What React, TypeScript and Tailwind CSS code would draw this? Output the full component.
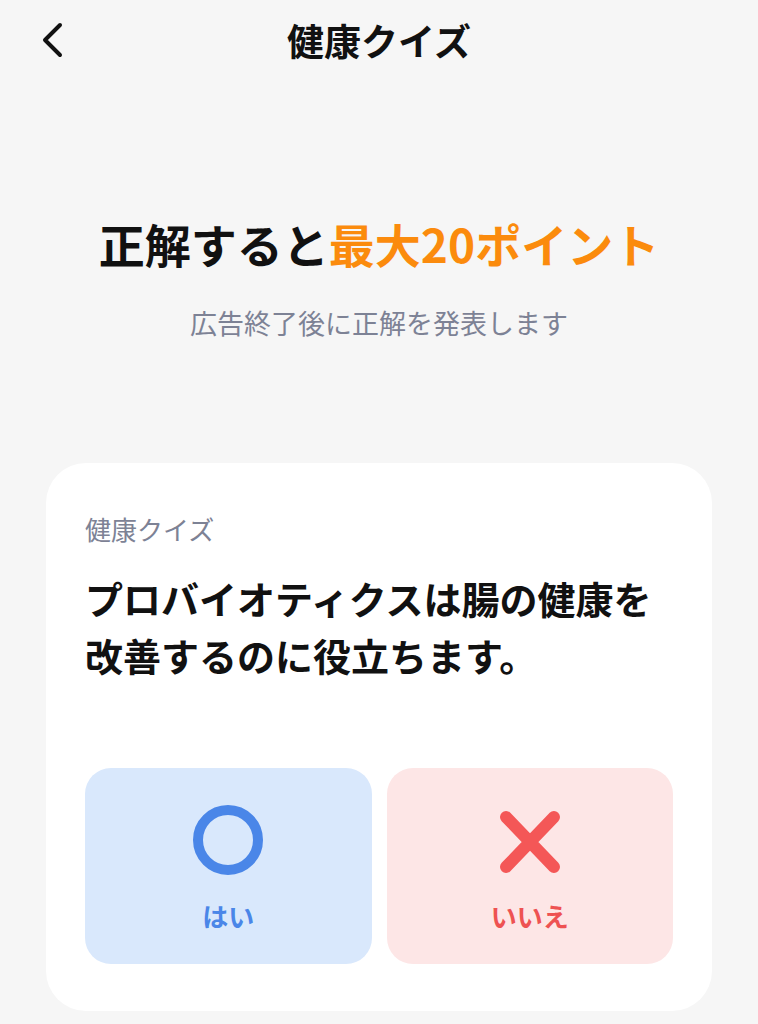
import React from 'react'

const jp = { fontFamily: '"Noto Sans CJK JP", "Noto Sans", sans-serif' }

function BackIcon() {
  return (
    <svg width="24" height="36" viewBox="0 0 24 36" fill="none">
      <polyline points="20,3 5,18 20,33" stroke="#111" strokeWidth="4" strokeLinecap="round" strokeLinejoin="round" />
    </svg>
  )
}

function CircleMark() {
  return (
    <svg width="72" height="72" viewBox="0 0 72 72" fill="none">
      <circle cx="36" cy="36" r="30" stroke="#4a86e8" strokeWidth="10" />
    </svg>
  )
}

function CrossMark() {
  return (
    <svg width="72" height="72" viewBox="0 0 72 72" fill="none">
      <path d="M12 13 L60 63 M60 13 L12 63" stroke="#f45757" strokeWidth="12" strokeLinecap="round" />
    </svg>
  )
}

export default function App() {
  return (
    <div className="min-h-[1024px] w-full bg-[#f6f6f6] flex flex-col" style={jp}>
      {/* header */}
      <div className="h-[80px] grid grid-cols-[1fr_auto_1fr] items-center px-[40px]">
        <button className="justify-self-start flex items-center"><BackIcon /></button>
        <div className="text-[37px] leading-[44px] font-bold text-[#111]">健康クイズ</div>
        <div />
      </div>

      <div className="mt-[135px] text-center text-[46px] leading-[56px] font-bold text-[#111]">
        正解すると<span className="text-[#fb8b0d]">最大20ポイント</span>
      </div>
      <div className="mt-[32px] text-center text-[27px] leading-[40px] text-[#7d8295]">
        広告終了後に正解を発表します
      </div>

      {/* card */}
      <div className="mt-[120px] mx-[46px] bg-white rounded-[40px] px-[39px] pt-[48px] pb-[47px]">
        <div className="text-[26px] leading-[36px] text-[#7d8295]">健康クイズ</div>
        <div className="mt-[22px] text-[38px] leading-[57px] font-bold text-[#111]">
          プロバイオティクスは腸の健康を<br />改善するのに役立ちます。
        </div>
        <div className="mt-[85px] grid grid-cols-2 gap-[15px]">
          <button className="h-[196px] rounded-[26px] bg-[#d9e8fc] flex flex-col items-center pt-[36px]">
            <CircleMark />
            <span className="mt-[22px] text-[26px] leading-[36px] font-bold text-[#4a86e8]">はい</span>
          </button>
          <button className="h-[196px] rounded-[26px] bg-[#fde6e6] flex flex-col items-center pt-[36px]">
            <CrossMark />
            <span className="mt-[22px] text-[26px] leading-[36px] font-bold text-[#ee5252]">いいえ</span>
          </button>
        </div>
      </div>
    </div>
  )
}
